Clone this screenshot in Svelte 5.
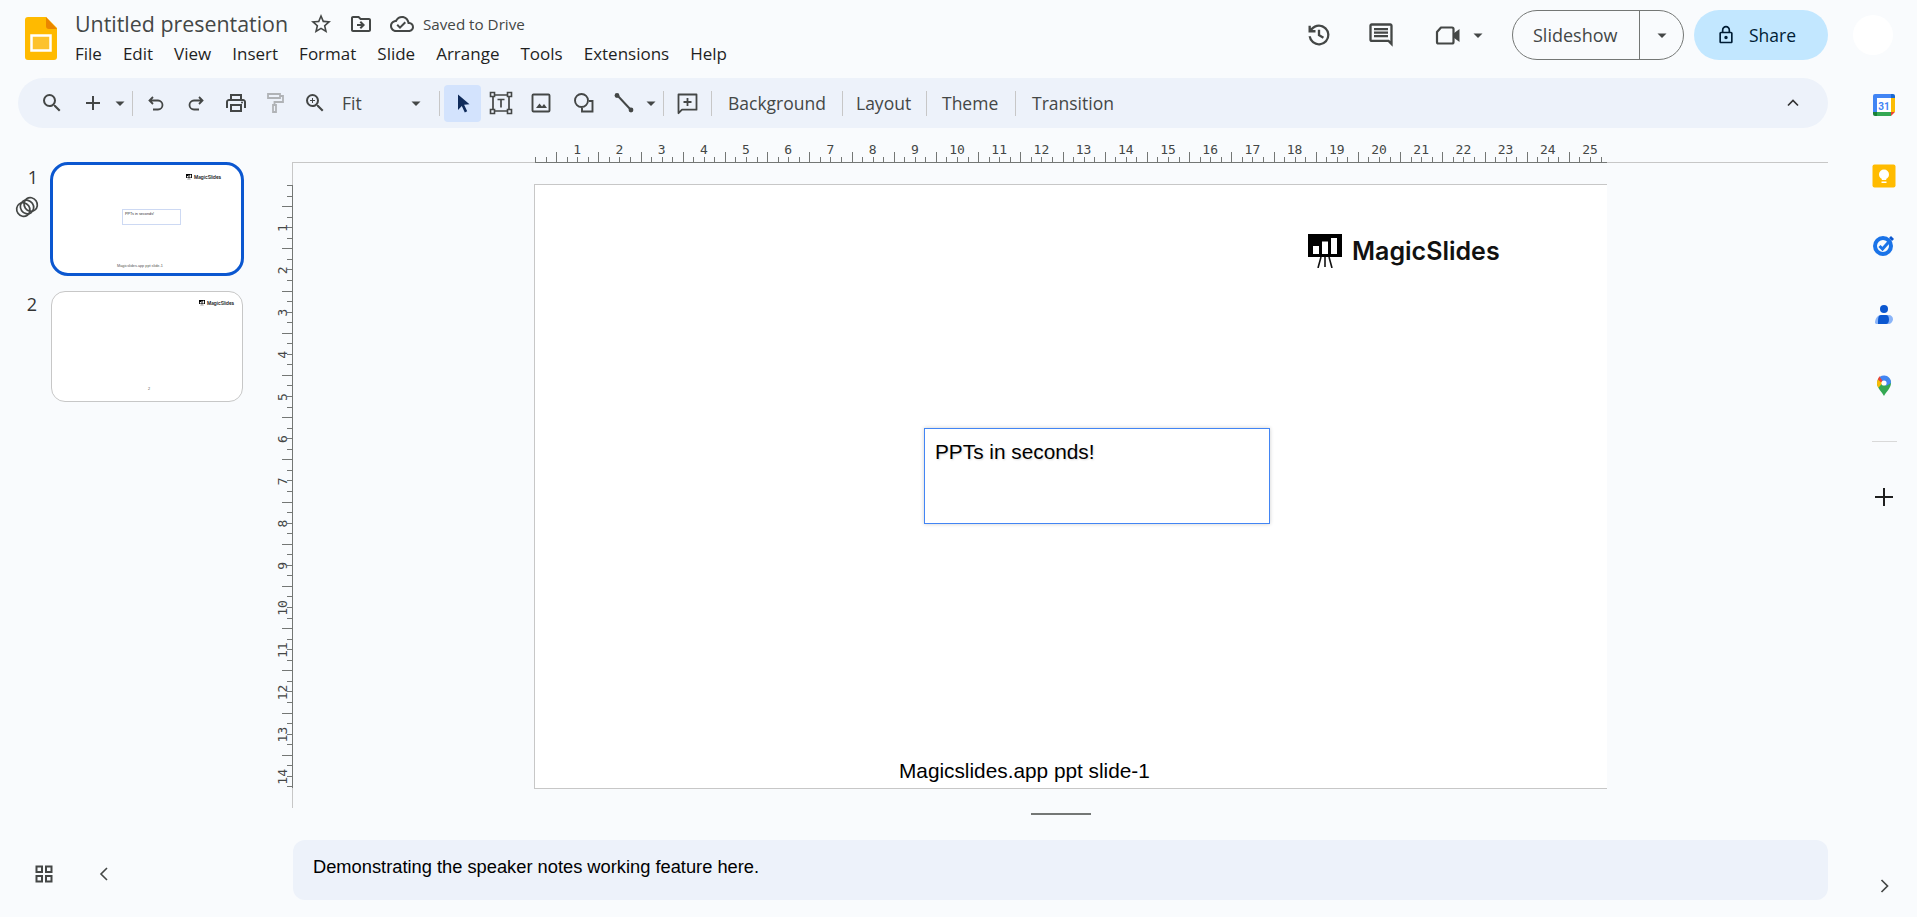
<script>
  const O = 535, V = 185, U = 42.2, Q = U / 4;
  const hTicks = Array.from({ length: 102 }, (_, i) => ({ i, x: Math.round(O + i * Q) + 0.5, len: i % 4 === 2 ? 10 : 5 }));
  const vTicks = Array.from({ length: 58 }, (_, i) => ({ i, y: Math.round(V + i * Q) + 0.5, len: i % 4 === 2 ? 10 : 5 }));
  const hLabels = Array.from({ length: 25 }, (_, i) => ({ n: i + 1, x: O + (i + 1) * U }));
  const vLabels = Array.from({ length: 14 }, (_, i) => ({ n: i + 1, y: V + (i + 1) * U + 1 }));
  const menu = ['File', 'Edit', 'View', 'Insert', 'Format', 'Slide', 'Arrange', 'Tools', 'Extensions', 'Help'];
</script>

{#snippet caret()}
  <svg class="i16" viewBox="0 0 16 16"><path d="M3.500 6.500h9L8 11z" fill="#444746" /></svg>
{/snippet}

{#snippet brand()}
  <svg viewBox="0 0 34 34" class="brand-svg">
    <path d="M0 0h34v23H0z" fill="#000" />
    <path d="M5 12h6v8H5zM14 7.500h6V20h-6zM23 4h6v16h-6z" fill="#fff" />
    <path d="M13 23l-3 11M21 23l3 11M17 23v10" stroke="#111" stroke-width="1.600" fill="none" />
  </svg>
{/snippet}

<div class="page">
  <div class="main">
    <header class="head">
      <svg class="doc" viewBox="0 0 32 43">
        <path d="M3 0h18l11 11v29a3 3 0 0 1-3 3H3a3 3 0 0 1-3-3V3a3 3 0 0 1 3-3z" fill="#ffba00" />
        <path d="M21 0l11 12h-8a3 3 0 0 1-3-3z" fill="#ea8600" />
        <rect x="6.500" y="18.500" width="19" height="15" fill="#fdc22c" stroke="#fff" stroke-width="2.500" />
      </svg>
      <div class="titles">
        <div class="title-row">
          <span class="title">Untitled presentation</span>
          <svg class="i24" viewBox="0 0 24 24"><path fill="#444746" d="M22 9.240l-7.190-.62L12 2 9.190 8.630 2 9.240l5.460 4.730L5.820 21 12 17.270 18.180 21l-1.630-7.030L22 9.240zM12 15.400l-3.760 2.270 1-4.280-3.320-2.880 4.380-.38L12 6.100l1.710 4.040 4.380.38-3.320 2.880 1 4.280L12 15.400z" /></svg>
          <svg class="i24 folder" viewBox="0 0 24 24"><path fill="#444746" d="M20 6h-8l-2-2H4c-1.100 0-2 .9-2 2v12c0 1.100.9 2 2 2h16c1.100 0 2-.9 2-2V8c0-1.100-.9-2-2-2zm0 12H4V6h5.170l2 2H20v10zM12.160 12l-1.590-1.590L12 9l4 4-4 4-1.410-1.410L12.160 14H8v-2h4.160z" /></svg>
          <svg class="i24 cloud" viewBox="0 0 24 24"><path fill="#444746" d="M19.350 10.040C18.670 6.590 15.640 4 12 4 9.110 4 6.600 5.640 5.350 8.040 2.340 8.360 0 10.910 0 14c0 3.310 2.690 6 6 6h13c2.760 0 5-2.240 5-5 0-2.640-2.050-4.780-4.650-4.960zM19 18H6c-2.210 0-4-1.790-4-4 0-2.050 1.530-3.760 3.560-3.970l1.070-.11.5-.95C8.080 7.140 9.940 6 12 6c2.620 0 4.880 1.860 5.390 4.430l.3 1.500 1.530.11c1.560.1 2.780 1.410 2.780 2.960 0 1.650-1.350 3-3 3zm-9-3.820l-2.090-2.090L6.500 13.500 10 17l6.010-6.010-1.410-1.410z" /></svg>
          <span class="saved">Saved to Drive</span>
        </div>
        <nav class="menu">
          {#each menu as m}<span>{m}</span>{/each}
        </nav>
      </div>
      <div class="actions">
        <svg class="i28 a-hist" viewBox="0 0 24 24"><path fill="#444746" d="M12 3a9 9 0 1 1-8.950 10h2.020A7 7 0 1 0 6.400 7.800H9v2H3V4h2v2.300A9 9 0 0 1 12 3zM11 7.500h2v4.100l3.300 2-1 1.700L11 12.700z" /></svg>
        <svg class="i28 a-comm" viewBox="0 0 24 24"><path fill="#444746" d="M21.990 4c0-1.100-.89-2-1.990-2H4c-1.100 0-2 .9-2 2v12c0 1.100.9 2 2 2h14l4 4-.01-18zM20 4v13.170L18.830 16H4V4h16zM6 12h12v2H6zm0-3h12v2H6zm0-3h12v2H6z" /></svg>
        <svg class="i28 a-vid" viewBox="0 0 28 28"><path d="M7 6.500h11a1.500 1.500 0 0 1 1.500 1.500v13a1.500 1.500 0 0 1-1.500 1.500H4.500A1.500 1.500 0 0 1 3 21v-10z" fill="none" stroke="#444746" stroke-width="2.200" stroke-linejoin="round" /><path d="M19.500 12.500l6-4.500v13l-6-4.500z" fill="#444746" /></svg>
        <span class="a-car">{@render caret()}</span>
        <div class="slideshow">
          <span class="ss-label">Slideshow</span>
          <span class="ss-drop">{@render caret()}</span>
        </div>
        <div class="share">
          <svg class="i20" viewBox="0 0 24 24"><path fill="#001d35" d="M18 8h-1V6c0-2.760-2.240-5-5-5S7 3.240 7 6v2H6c-1.100 0-2 .9-2 2v10c0 1.100.9 2 2 2h12c1.100 0 2-.9 2-2V10c0-1.100-.9-2-2-2zM9 6c0-1.660 1.340-3 3-3s3 1.340 3 3v2H9V6zm9 14H6V10h12v10zm-6-3c1.100 0 2-.9 2-2s-.9-2-2-2-2 .9-2 2 .9 2 2 2z" /></svg>
          <span>Share</span>
        </div>
      </div>
    </header>

    <div class="toolbar">
      <span class="b w40"><svg class="i24" viewBox="0 0 24 24"><path fill="#444746" d="M15.500 14h-.79l-.28-.27A6.471 6.471 0 0 0 16 9.500 6.500 6.500 0 1 0 9.500 16c1.610 0 3.090-.59 4.230-1.570l.27.28v.79l5 4.990L20.490 19l-4.990-5zm-6 0C7.010 14 5 11.990 5 9.500S7.010 5 9.500 5 14 7.010 14 9.500 11.990 14 9.500 14z" /></svg></span>
      <span class="b w40 nudge"><svg class="i24" viewBox="0 0 24 24"><path fill="#444746" d="M19 13h-6v6h-2v-6H5v-2h6V5h2v6h6v2z" /></svg></span>
      <span class="b w16">{@render caret()}</span>
      <i class="sep s4"></i>
      <span class="b w40 m3"><svg class="i24" viewBox="0 0 24 24"><path d="M9 6L5.500 9.500 9 13M5.500 9.500H14a4.500 4.500 0 0 1 0 9H9" fill="none" stroke="#444746" stroke-width="1.800" /></svg></span>
      <span class="b w40"><svg class="i24" viewBox="0 0 24 24"><path d="M15 6l3.500 3.500L15 13M18.500 9.500H10a4.500 4.500 0 0 0 0 9h5" fill="none" stroke="#444746" stroke-width="1.800" /></svg></span>
      <span class="b w39"><svg class="i24" viewBox="0 0 24 24"><path fill="#444746" d="M19 8h-1V3H6v5H5c-1.660 0-3 1.340-3 3v6h4v4h12v-4h4v-6c0-1.660-1.340-3-3-3zM8 5h8v3H8V5zm8 14H8v-4h8v4zm2-2v-4H6v4H4v-6c0-.55.45-1 1-1h14c.55 0 1 .45 1 1v6h-2z" /><circle cx="18" cy="11.500" r="1" fill="#444746" /></svg></span>
      <span class="b w39"><svg class="i24" viewBox="0 0 24 24"><path d="M5 3h12v4H5zM17 5h3v6h-8.500v3M10 14h3v7h-3z" fill="none" stroke="#b0b3b6" stroke-width="1.800" /></svg></span>
      <span class="b w40 nudge"><svg class="i24" viewBox="0 0 24 24"><path fill="#444746" d="M15.500 14h-.79l-.28-.27A6.471 6.471 0 0 0 16 9.500 6.500 6.500 0 1 0 9.500 16c1.610 0 3.090-.59 4.230-1.570l.27.28v.79l5 4.990L20.490 19l-4.990-5zm-6 0C7.010 14 5 11.990 5 9.500S7.010 5 9.500 5 14 7.010 14 9.500 11.990 14 9.500 14zm.5-7H9v2H7v1h2v2h1v-2h2V9h-2z" /></svg></span>
      <span class="fit">Fit</span>
      <span class="b w16">{@render caret()}</span>
      <i class="sep s15"></i>
      <span class="b sel"><svg class="i24" viewBox="0 0 24 24"><path d="M7 3.500l11.500 9.800-5.400.5 3.100 6.400-2.400 1.200-3-6.500L7 19z" fill="#0f2b5b" /></svg></span>
      <span class="b w40"><svg class="i28" viewBox="0 0 28 28"><path d="M6 6h16v16H6z" fill="none" stroke="#444746" stroke-width="1.700" /><path d="M3.500 3.500h4v4h-4zM20.500 3.500h4v4h-4zM3.500 20.500h4v4h-4zM20.500 20.500h4v4h-4z" fill="#eef2fa" stroke="#444746" stroke-width="1.600" /><path d="M10.500 10.500h7M14 10.500v8" fill="none" stroke="#444746" stroke-width="1.700" /></svg></span>
      <span class="b w40"><svg class="i24" viewBox="0 0 24 24"><path d="M4.500 3.500h15a1 1 0 0 1 1 1v15a1 1 0 0 1-1 1h-15a1 1 0 0 1-1-1v-15a1 1 0 0 1 1-1z" fill="none" stroke="#444746" stroke-width="1.900" /><path d="M7 17l3.500-4.500 2.500 3 2-2.500L18 17z" fill="#444746" /></svg></span>
      <span class="b w40 m3"><svg class="i24" viewBox="0 0 24 24"><circle cx="9.500" cy="9.500" r="6.500" fill="none" stroke="#444746" stroke-width="1.900" /><path d="M17 10h3.500v10.500H10V17" fill="none" stroke="#444746" stroke-width="1.900" /></svg></span>
      <span class="b w40"><svg class="i24" viewBox="0 0 24 24"><path d="M5 4l14 15" stroke="#444746" stroke-width="2" /><circle cx="5" cy="4.500" r="2.400" fill="#444746" /><circle cx="19" cy="19" r="2.400" fill="#444746" /></svg></span>
      <span class="b w16 mn1">{@render caret()}</span>
      <i class="sep s4"></i>
      <span class="b w40 m3"><svg class="i24" viewBox="0 0 24 24"><path d="M3.500 3.500h18v15.200H7l-3.500 3.500z" fill="none" stroke="#444746" stroke-width="1.800" stroke-linejoin="round" /><path d="M12.500 7v8M8.500 11h8" stroke="#444746" stroke-width="1.800" /></svg></span>
      <i class="sep s4"></i>
      <span class="tbtn t-bg">Background</span>
      <i class="sep"></i>
      <span class="tbtn t-lay">Layout</span>
      <i class="sep"></i>
      <span class="tbtn t-th">Theme</span>
      <i class="sep"></i>
      <span class="tbtn t-tr">Transition</span>
      <svg class="i24 collapse" viewBox="0 0 24 24"><path d="M7 14.500l5-5 5 5" fill="none" stroke="#333" stroke-width="1.700" /></svg>
    </div>

    <div class="work">
      <aside class="film">
        <div class="row">
          <div class="num">
            <span>1</span>
            <svg class="anim" viewBox="0 0 24 24"><g fill="none" stroke="#444746" stroke-width="1.700" transform="rotate(-35 12 12)"><ellipse cx="7.500" cy="12" rx="6.500" ry="7" /><ellipse cx="12" cy="12" rx="6.500" ry="7" /><ellipse cx="16.500" cy="12" rx="6.500" ry="7" /></g></svg>
          </div>
          <div class="thumb active">
            <span class="t-logo l1">{@render brand()}<b>MagicSlides</b></span>
            <span class="t-box">PPTs in seconds!</span>
            <span class="t-foot">Magicslides.app ppt slide-1</span>
          </div>
        </div>
        <div class="row r2">
          <div class="num n2"><span>2</span></div>
          <div class="thumb">
            <span class="t-logo l2">{@render brand()}<b>MagicSlides</b></span>
            <span class="t-foot f2">2</span>
          </div>
        </div>
        <div class="film-foot">
          <svg class="i18" viewBox="0 0 18 18"><path d="M1.500 1.500h5.500v5.500H1.500zM11 1.500h5.500v5.500H11zM1.500 11h5.500v5.500H1.500zM11 11h5.500v5.500H11z" fill="none" stroke="#444746" stroke-width="2" /></svg>
          <svg class="i14 back" viewBox="0 0 10 14"><path d="M8 1L2 7l6 6" fill="none" stroke="#444746" stroke-width="1.600" /></svg>
        </div>
      </aside>

      <div class="center">
        <div class="stage">
          <svg class="ruler" viewBox="232 122 1600 690">
            <path d="M535 162.500H1607M292.500 185V788" stroke="#747775" stroke-width="1" fill="none" />
            {#each hTicks as t}<line x1={t.x} x2={t.x} y1="162" y2={162 - t.len} stroke="#747775" />{/each}
            {#each vTicks as t}<line y1={t.y} y2={t.y} x1="292" x2={292 - t.len} stroke="#747775" />{/each}
            {#each hLabels as l}<text class="rt" x={l.x} y="154" text-anchor="middle">{l.n}</text>{/each}
            {#each vLabels as l}<text class="rt" transform="translate(287 {l.y}) rotate(-90)" text-anchor="middle">{l.n}</text>{/each}
          </svg>
          <div class="slide">
            <div class="s-logo">{@render brand()}<b>MagicSlides</b></div>
            <div class="s-box">PPTs in seconds!</div>
            <div class="s-foot">Magicslides.app ppt slide-1</div>
          </div>
        </div>
        <div class="handle"></div>
        <div class="notes">Demonstrating the speaker notes working feature here.</div>
      </div>
    </div>
  </div>

  <aside class="side">
    <div class="avatar"></div>
    <div class="slot">
      <svg class="i24" viewBox="0 0 24 24">
        <path d="M5 1h14v4H5z" fill="#4285f4" /><path d="M1 5h4v14H1z" fill="#4285f4" /><path d="M19 5h4v14h-4z" fill="#fbbc04" />
        <path d="M5 19h14v4H5z" fill="#34a853" /><path d="M19 19h4l-4 4z" fill="#ea4335" /><path d="M19 1h2a2 2 0 0 1 2 2v2h-4z" fill="#1967d2" />
        <path d="M1 19h4v4H3a2 2 0 0 1-2-2z" fill="#188038" /><path d="M5 1H3a2 2 0 0 0-2 2v2h4z" fill="#4285f4" /><path d="M5 5h14v14H5z" fill="#fff" />
        <text x="12" y="16.500" class="cal">31</text>
      </svg>
    </div>
    <div class="slot">
      <svg class="i24 keep" viewBox="0 0 24 24"><rect x="0.500" y="0.500" width="23" height="23" rx="2" fill="#ffbb00" /><circle cx="12" cy="10.500" r="5" fill="#fff" /><path d="M9.800 13h4.400v3H9.800zM9.500 17.500h5V19h-5z" fill="#fff" /></svg>
    </div>
    <div class="slot">
      <svg class="i24" viewBox="0 0 24 24"><circle cx="11" cy="13" r="8" fill="none" stroke="#1a73e8" stroke-width="4" /><path d="M7.500 13l3 3 8-9" fill="none" stroke="#1a73e8" stroke-width="3" /><path d="M19 3l3 3-2 2-3-3z" fill="#0b57d0" /></svg>
    </div>
    <div class="slot">
      <svg class="i24" viewBox="0 0 24 24"><circle cx="12" cy="6" r="4" fill="#0b57d0" /><path d="M3 20c0-5 3-8 6-8h8c2 0 4 2 4 4s-2 5-4 5H4z" fill="#8ab4f8" /><path d="M9 12h5c2 0 3 2 3 4.500S16 21 14 21H6c0-5 0-9 3-9z" fill="#0b57d0" /></svg>
    </div>
    <div class="slot">
      <svg class="i24" viewBox="0 0 24 24">
        <path d="M12 23c-1.500-3.500-7-7.500-7-13a7 7 0 0 1 14 0c0 5.500-5.500 9.500-7 13z" fill="#34a853" />
        <path d="M5.800 6.500A7 7 0 0 0 5 10c0 1.800.6 3.400 1.400 4.800L11 9.500z" fill="#fbbc04" />
        <path d="M5.800 6.500l3.500 3 2.500-3-4-3.300a7 7 0 0 0-2 3.300z" fill="#ea4335" />
        <path d="M7.800 4A7 7 0 0 1 17 4.500L12 10z" fill="#4285f4" />
        <path d="M17 4.500a7 7 0 0 1 2 5.500l-5 3-2-3z" fill="#4285f4" />
        <circle cx="12" cy="10" r="2.600" fill="#fff" />
      </svg>
    </div>
    <i class="side-sep"></i>
    <div class="slot">
      <svg class="i24" viewBox="0 0 24 24"><path fill="#1f1f1f" d="M21 13h-8v8h-2v-8H3v-2h8V3h2v8h8v2z" /></svg>
    </div>
    <svg class="i16 side-more" viewBox="0 0 16 16"><path d="M5.500 2l6 6-6 6" fill="none" stroke="#444746" stroke-width="1.700" /></svg>
  </aside>
</div>

<style>
  :global(body) { margin: 0; background: #f9fbfd; }
  .page { display: flex; width: 1917px; height: 917px; overflow: hidden; background: #f9fbfd; font-family: "Open Sans", sans-serif; }
  .main { width: 1828px; flex: none; display: flex; flex-direction: column; }
  svg { display: block; flex: none; }
  .i14 { width: 10px; height: 14px; }
  .i16 { width: 16px; height: 16px; }
  .i18 { width: 18px; height: 18px; }
  .i20 { width: 20px; height: 20px; }
  .i24 { width: 24px; height: 24px; }
  .i28 { width: 28px; height: 28px; }

  .head { height: 78px; flex: none; display: flex; box-sizing: border-box; padding-left: 25px; position: relative; }
  .doc { width: 32px; height: 43px; margin-top: 17px; }
  .titles { margin-left: 18px; padding-top: 9px; }
  .title-row { height: 30px; display: flex; align-items: center; }
  .title { width: 234px; flex: none; font-size: 21.400px; color: #444746; white-space: nowrap; margin-top: -2px; }
  .folder { margin-left: 16px; }
  .cloud { margin-left: 17px; }
  .saved { margin-left: 9px; font-size: 15.200px; color: #444746; }
  .menu { height: 30px; margin-top: -1px; display: flex; align-items: center; gap: 21px; font-size: 17px; color: #1f1f1f; }

  .actions { margin-left: auto; height: 50px; margin-top: 10px; display: flex; align-items: center; }
  .a-comm { margin-left: 34px; }
  .a-vid { margin-left: 39px; }
  .a-car { margin-left: 8px; }
  .slideshow { margin-left: 26px; width: 172px; height: 50px; box-sizing: border-box; border: 1px solid #747775; border-radius: 25px; display: flex; align-items: stretch; font-size: 18px; color: #444746; }
  .ss-label { width: 127px; padding-left: 20px; box-sizing: border-box; display: flex; align-items: center; border-right: 1px solid #747775; }
  .ss-drop { flex: 1; display: flex; align-items: center; justify-content: center; }
  .share { margin-left: 10px; width: 134px; height: 50px; box-sizing: border-box; padding-left: 22px; border-radius: 25px; background: #c2e7ff; display: flex; align-items: center; gap: 13px; font-size: 17.500px; color: #001d35; font-weight: 500; }

  .toolbar { height: 50px; flex: none; margin-left: 18px; box-sizing: border-box; padding-left: 14px; border-radius: 25px; background: #edf2fa; display: flex; align-items: center; position: relative; }
  .b { display: flex; align-items: center; justify-content: center; flex: none; height: 37px; }
  .w40 { width: 40px; }
  .w39 { width: 39px; }
  .w16 { width: 16px; }
  .m3 { margin-left: 3px; }
  .mn1 { margin-left: -1px; }
  .nudge svg { margin-left: 1px; }
  .sep { flex: none; width: 1px; height: 25px; background: #c7c7c7; }
  .s4 { margin-left: 4px; }
  .s15 { margin-left: 15px; }
  .fit { width: 74px; box-sizing: border-box; padding-left: 8px; font-size: 17.500px; color: #444746; }
  .sel { width: 37px; margin-left: 4px; background: #d3e3fd; border-radius: 4px; }
  .tbtn { font-size: 17.500px; color: #444746; white-space: nowrap; flex: none; }
  .t-bg { width: 130px; padding-left: 16px; box-sizing: border-box; }
  .t-lay { width: 83px; padding-left: 13px; box-sizing: border-box; }
  .t-th { width: 88px; padding-left: 15px; box-sizing: border-box; }
  .t-tr { padding-left: 16px; }
  .collapse { margin-left: auto; margin-right: 23px; }

  .work { flex: 1; display: flex; min-height: 0; }
  .film { width: 292px; flex: none; padding-top: 34px; box-sizing: border-box; display: flex; flex-direction: column; }
  .row { display: flex; }
  .r2 { margin-top: 15px; }
  .num { width: 50px; flex: none; box-sizing: border-box; padding-right: 12px; display: flex; flex-direction: column; align-items: flex-end; font-size: 18px; color: #333; line-height: 22px; padding-top: 4px; position: relative; }
  .n2 { width: 51px; padding-right: 14px; padding-top: 2px; }
  .anim { width: 24px; height: 24px; margin-top: 7px; margin-right: -1px; }
  .thumb { width: 190px; height: 109px; box-sizing: content-box; border: 1px solid #c7c7c7; border-radius: 14px; background: #fff; position: relative; overflow: hidden; }
  .thumb.active { width: 188px; height: 108px; border: 3px solid #0b57d0; border-radius: 18px; }
  .t-logo { position: absolute; display: flex; align-items: center; gap: 2px; font-size: 4.600px; font-family: Inter, sans-serif; color: #111; }
  .t-logo :global(.brand-svg) { width: 6px; height: 6px; }
  .t-logo b { font-weight: 600; }
  .l1 { left: 133px; top: 9px; }
  .l2 { left: 147px; top: 8px; }
  .t-box { position: absolute; left: 69px; top: 44px; width: 59px; height: 16px; border: 1px solid #cdd9f3; font: 3.800px "Liberation Sans", sans-serif; color: #333; padding: 2px; box-sizing: border-box; }
  .t-foot { position: absolute; left: 64px; top: 99px; font: 3.800px "Liberation Sans", sans-serif; color: #555; white-space: nowrap; }
  .f2 { left: 96px; top: 95px; }
  .film-foot { margin-top: auto; padding: 0 0 34px 35px; display: flex; align-items: center; }
  .back { margin-left: 46px; }

  .center { flex: 1; display: flex; flex-direction: column; padding-top: 34px; min-width: 0; }
  .stage { height: 646px; flex: none; box-sizing: border-box; border-top: 1px solid #c7c7c7; border-left: 1px solid #c7c7c7; position: relative; padding: 21px 0 0 241px; }
  .ruler { position: absolute; left: -61px; top: -41px; width: 1600px; height: 690px; overflow: visible; pointer-events: none; }
  .rt { font: 13px "DejaVu Sans Mono", monospace; fill: #444746; }
  .slide { width: 1073px; height: 605px; box-sizing: border-box; background: #fff; border: 1px solid #c7c7c7; border-right: 0; position: relative; }
  .s-logo { position: absolute; left: 773px; top: 49px; display: flex; align-items: flex-start; gap: 10px; font-family: Inter, sans-serif; font-size: 25px; line-height: 36px; color: #111; }
  .s-logo :global(.brand-svg) { width: 34px; height: 34px; }
  .s-logo b { font-weight: 600; margin-top: -1px; }
  .s-box { position: absolute; left: 389px; top: 243px; width: 346px; height: 96px; box-sizing: border-box; border: 1px solid #4285f4; box-shadow: 0 0 4px rgba(0,0,0,.2); padding: 11px 10px; font: 20.800px "Liberation Sans", sans-serif; color: #000; text-shadow: 1px 1px 2px rgba(0,0,0,.15); }
  .s-foot { position: absolute; left: 364px; top: 574px; font: 20.800px "Liberation Sans", sans-serif; color: #000; white-space: nowrap; }
  .handle { flex: none; width: 60px; height: 1.500px; background: #747775; margin: 5px 0 0 739px; }
  .notes { margin: 25.500px 0 0 1px; height: 60px; flex: none; box-sizing: border-box; padding: 17px 20px 0; border-radius: 12px; background: #edf2fa; font: 18.300px/20px "Liberation Sans", sans-serif; color: #000; }

  .side { flex: 1; display: flex; flex-direction: column; align-items: center; padding-left: 23px; box-sizing: border-box; }
  .avatar { width: 40px; height: 40px; margin: 15px 0 15px -22px; border-radius: 50%; background: #fff; flex: none; }
  .slot { height: 70px; flex: none; display: flex; align-items: center; justify-content: center; }
  .keep { margin-top: 1px; }
  .cal { font: 700 10px "Roboto", sans-serif; fill: #4285f4; text-anchor: middle; }
  .side-sep { width: 25px; height: 1px; background: #d9d9d9; margin: 21px 0 20px; flex: none; }
  .side-more { margin-top: auto; margin-bottom: 23px; }
</style>
